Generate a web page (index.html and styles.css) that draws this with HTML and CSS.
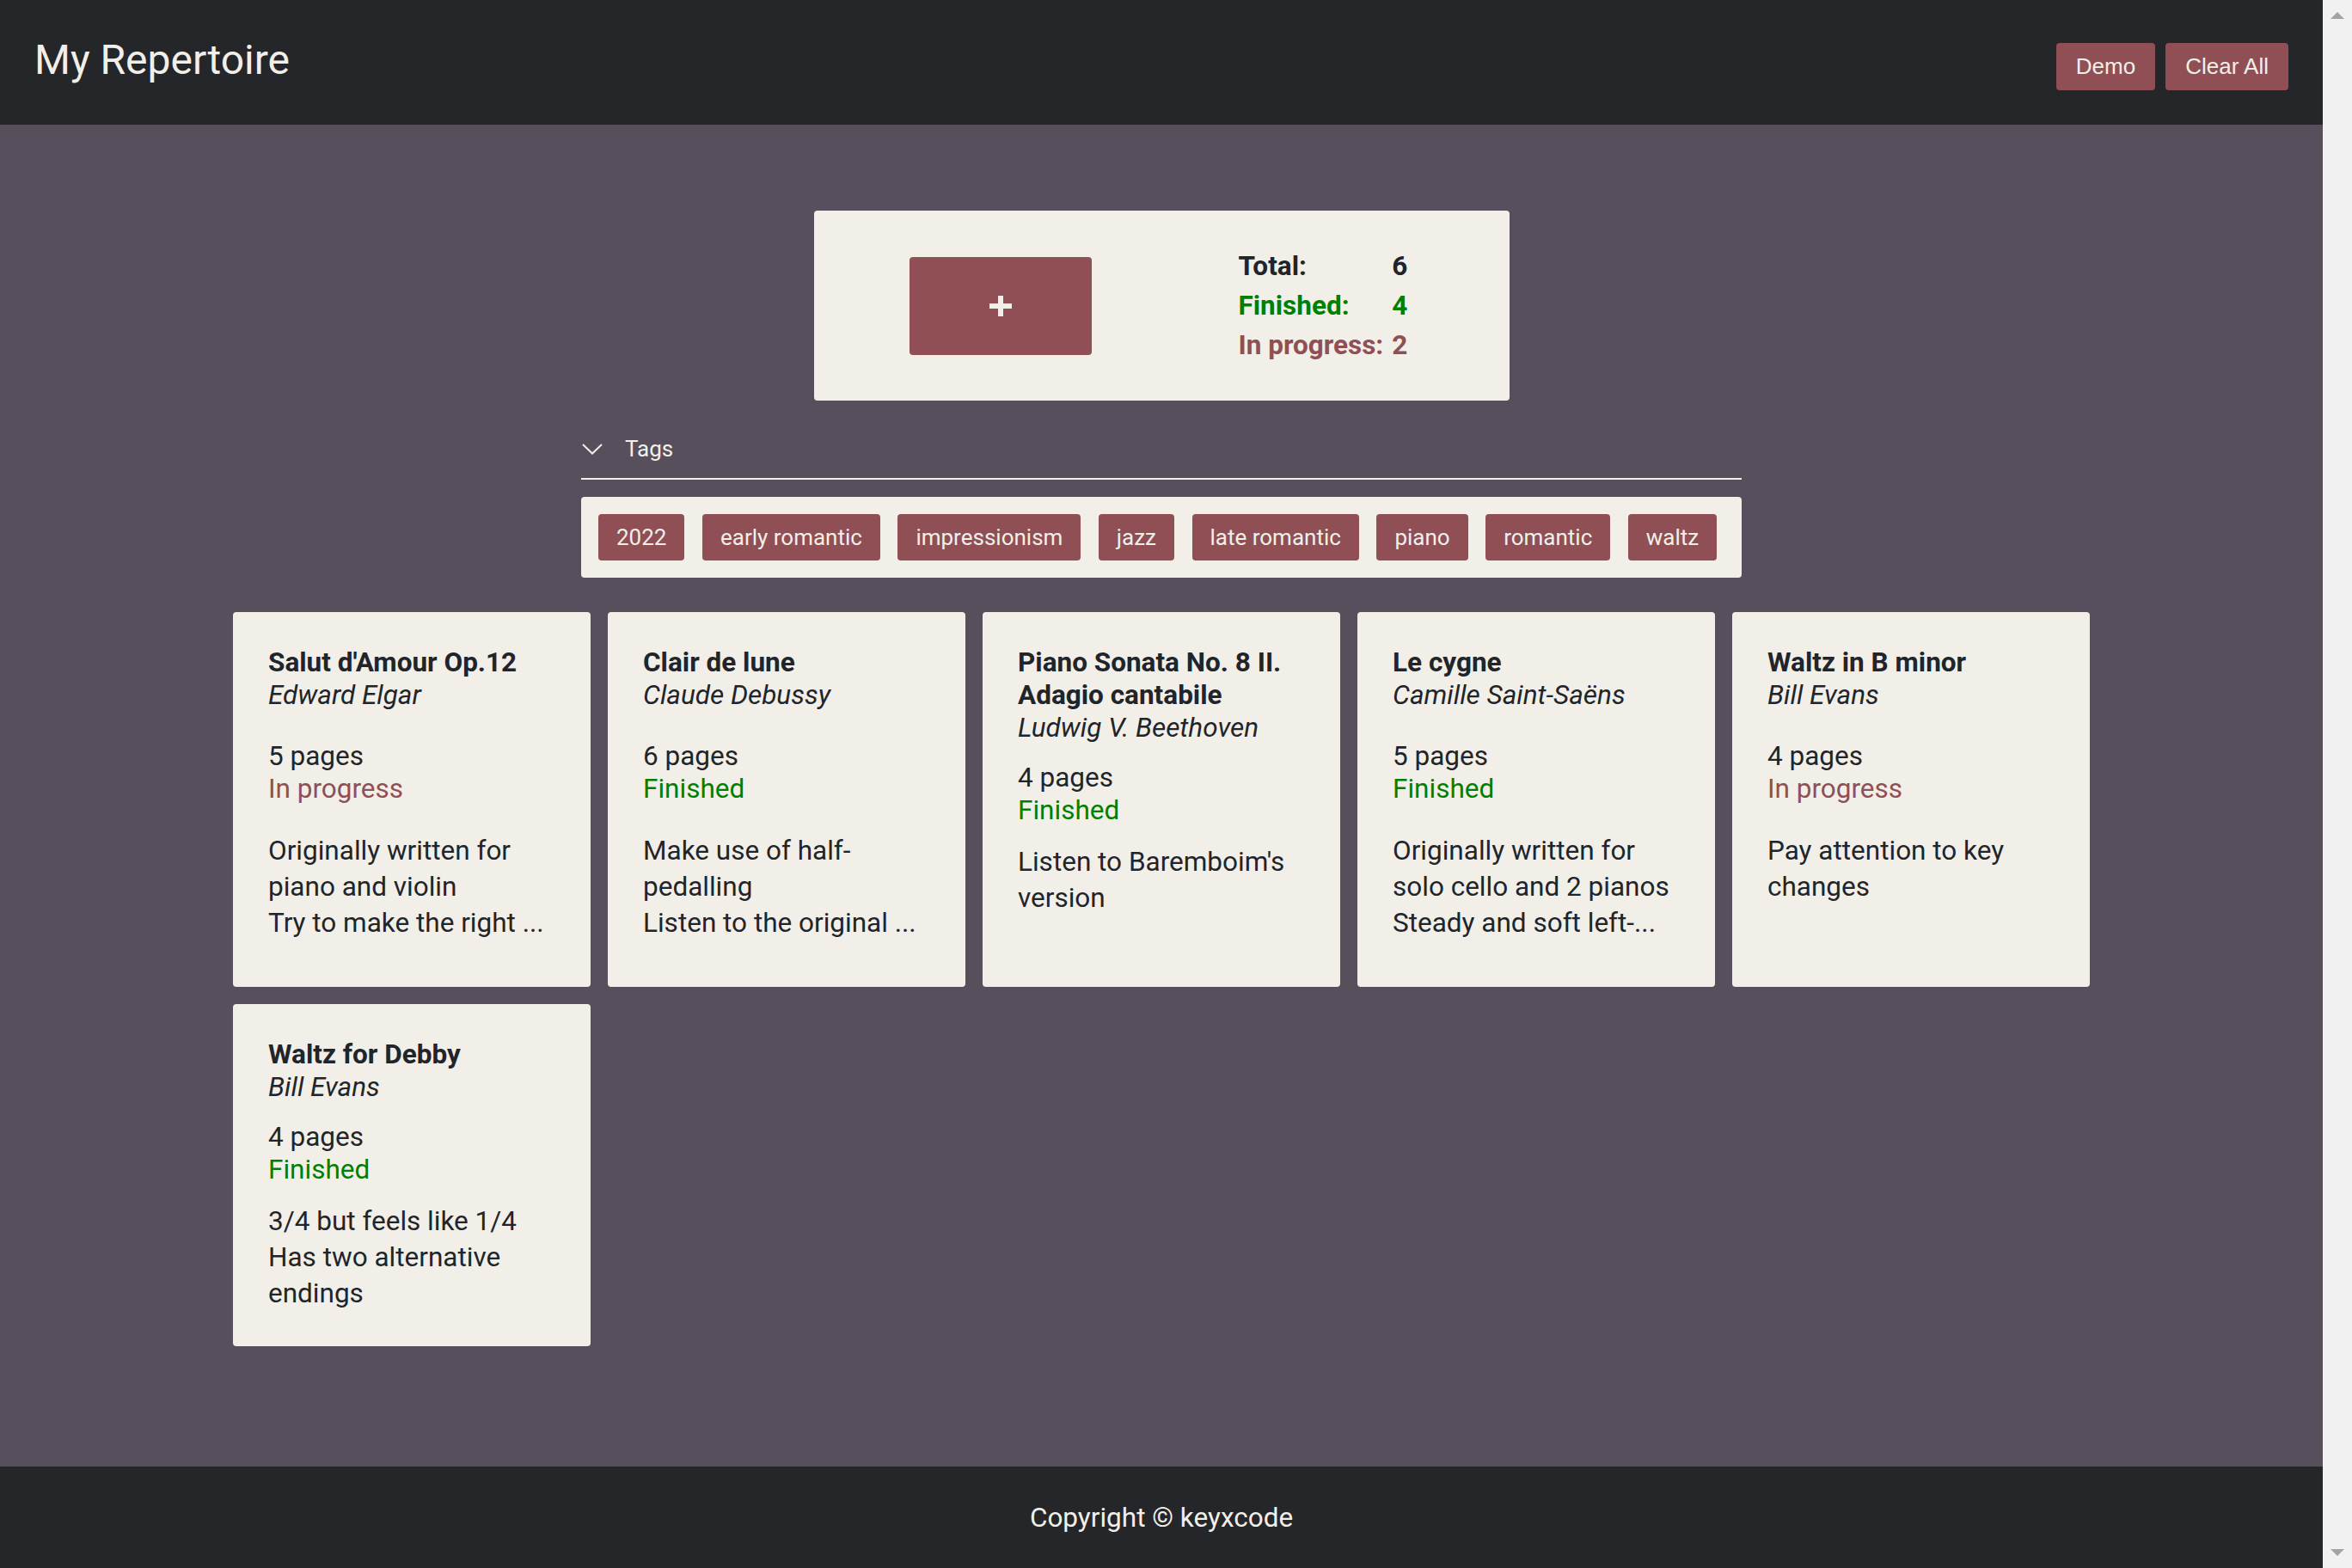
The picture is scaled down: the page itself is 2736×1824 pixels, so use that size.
FILE: index.html
```html
<!DOCTYPE html>
<html>
<head>
    <meta charset="UTF-8">
    <title>My Repertoire</title>
    <link rel="stylesheet" href="styles.css">
</head>
<body>
    <div class="window">
        <div class="page">
            <header class="topbar">
                <h1 class="brand">My Repertoire</h1>
                <div class="actions">
                    <button class="btn">Demo</button>
                    <button class="btn">Clear All</button>
                </div>
            </header>

            <main class="content">
                <section class="summary">
                    <button class="add-btn" title="Add piece">
                        <svg width="26" height="24" viewBox="0 0 26 24">
                            <rect x="0" y="9" width="26" height="6" fill="#f2efe9"/>
                            <rect x="10" y="0" width="6" height="24" fill="#f2efe9"/>
                        </svg>
                    </button>
                    <table class="stats">
                        <tr class="total"><td>Total:</td><td class="num">6</td></tr>
                        <tr class="finished"><td>Finished:</td><td class="num">4</td></tr>
                        <tr class="progress"><td>In progress:</td><td class="num">2</td></tr>
                    </table>
                </section>

                <section class="tags">
                    <div class="tags-head">
                        <svg class="chevron" width="24" height="13" viewBox="0 0 24 13">
                            <polyline points="1,1 12,11.5 23,1" fill="none" stroke="#f2efe9" stroke-width="2"/>
                        </svg>
                        <span>Tags</span>
                    </div>
                    <div class="tag-list">
                        <span class="tag">2022</span>
                        <span class="tag">early romantic</span>
                        <span class="tag">impressionism</span>
                        <span class="tag">jazz</span>
                        <span class="tag">late romantic</span>
                        <span class="tag">piano</span>
                        <span class="tag">romantic</span>
                        <span class="tag">waltz</span>
                    </div>
                </section>

                <section class="pieces">
                    <div class="card">
                        <div class="card-head">
                            <h2>Salut d'Amour Op.12</h2>
                            <p class="composer">Edward Elgar</p>
                        </div>
                        <div class="card-meta">
                            <p>5 pages</p>
                            <p class="status-progress">In progress</p>
                        </div>
                        <div class="card-notes">
                            <p class="notes">Originally written for piano and violin
Try to make the right ...</p>
                        </div>
                    </div>

                    <div class="card">
                        <div class="card-head">
                            <h2>Clair de lune</h2>
                            <p class="composer">Claude Debussy</p>
                        </div>
                        <div class="card-meta">
                            <p>6 pages</p>
                            <p class="status-finished">Finished</p>
                        </div>
                        <div class="card-notes">
                            <p class="notes">Make use of half-pedalling
Listen to the original ...</p>
                        </div>
                    </div>

                    <div class="card">
                        <div class="card-head">
                            <h2>Piano Sonata No. 8 II. Adagio cantabile</h2>
                            <p class="composer">Ludwig V. Beethoven</p>
                        </div>
                        <div class="card-meta">
                            <p>4 pages</p>
                            <p class="status-finished">Finished</p>
                        </div>
                        <div class="card-notes">
                            <p class="notes">Listen to Baremboim's version</p>
                        </div>
                    </div>

                    <div class="card">
                        <div class="card-head">
                            <h2>Le cygne</h2>
                            <p class="composer">Camille Saint-Saëns</p>
                        </div>
                        <div class="card-meta">
                            <p>5 pages</p>
                            <p class="status-finished">Finished</p>
                        </div>
                        <div class="card-notes">
                            <p class="notes">Originally written for solo cello and 2 pianos
Steady and soft left-...</p>
                        </div>
                    </div>

                    <div class="card">
                        <div class="card-head">
                            <h2>Waltz in B minor</h2>
                            <p class="composer">Bill Evans</p>
                        </div>
                        <div class="card-meta">
                            <p>4 pages</p>
                            <p class="status-progress">In progress</p>
                        </div>
                        <div class="card-notes">
                            <p class="notes">Pay attention to key changes</p>
                        </div>
                    </div>

                    <div class="card">
                        <div class="card-head">
                            <h2>Waltz for Debby</h2>
                            <p class="composer">Bill Evans</p>
                        </div>
                        <div class="card-meta">
                            <p>4 pages</p>
                            <p class="status-finished">Finished</p>
                        </div>
                        <div class="card-notes">
                            <p class="notes">3/4 but feels like 1/4
Has two alternative endings</p>
                        </div>
                    </div>
                </section>
            </main>

            <footer class="footer">Copyright © keyxcode</footer>
        </div>

        <div class="scrollbar">
            <span class="arrow-up"></span>
            <span class="arrow-down"></span>
        </div>
    </div>
</body>
</html>
```

FILE: styles.css
```css
* {
    box-sizing: border-box;
}

body {
    margin: 0;
    font-family: Roboto, "Liberation Sans", sans-serif;
    color: #212529;
    background-color: #574f5b;
}

.window {
    display: flex;
    min-height: 100vh;
}

.page {
    flex: 1;
    display: flex;
    flex-direction: column;
}

/* header */
.topbar {
    height: 145px;
    padding: 0 40px;
    display: flex;
    justify-content: space-between;
    align-items: flex-start;
    background-color: #252629;
}

.brand {
    margin: 42px 0 0;
    font-size: 48px;
    line-height: 56px;
    font-weight: 400;
    color: #f2efe9;
}

.actions {
    margin-top: 50px;
    display: flex;
    gap: 12px;
}

.btn {
    height: 55px;
    padding: 0 23px;
    border: none;
    border-radius: 4px;
    background-color: #8f4f55;
    color: #f2efe9;
    font-family: "Liberation Sans", Arial, sans-serif;
    font-size: 26px;
    cursor: pointer;
}

/* main */
.content {
    flex: 1;
    padding-top: 100px;
    padding-bottom: 40px;
}

.summary {
    width: 809px;
    height: 221px;
    margin: 0 auto;
    padding-left: 111px;
    display: flex;
    align-items: center;
    gap: 171px;
    background-color: #f2efe9;
    border-radius: 4px;
}

.add-btn {
    width: 212px;
    height: 114px;
    border: none;
    border-radius: 4px;
    background-color: #8f4f55;
    display: flex;
    align-items: center;
    justify-content: center;
    cursor: pointer;
}

.stats {
    border-collapse: collapse;
    font-size: 31.5px;
    font-weight: 700;
}

.stats td {
    padding: 0;
    height: 46px;
    line-height: 46px;
}

.stats .num {
    padding-left: 10px;
}

.total {
    color: #212529;
}

.finished {
    color: #008000;
}

.progress {
    color: #8f4f55;
}

/* tags */
.tags {
    width: 1350px;
    margin: 42px auto 0;
}

.tags-head {
    display: flex;
    align-items: center;
    gap: 26px;
    height: 50px;
    padding-bottom: 20px;
    border-bottom: 2px solid #f2efe9;
    color: #f2efe9;
    font-size: 26px;
    line-height: 30px;
}

.chevron {
    margin-left: 1px;
}

.tag-list {
    margin-top: 20px;
    padding: 20px;
    display: flex;
    flex-wrap: wrap;
    gap: 20.5px;
    background-color: #f2efe9;
    border-radius: 4px;
}

.tag {
    height: 54px;
    padding: 0 21px;
    display: inline-flex;
    align-items: center;
    border-radius: 4px;
    background-color: #8f4f55;
    color: #f2efe9;
    font-size: 26px;
}

/* cards */
.pieces {
    margin-top: 40px;
    display: grid;
    grid-template-columns: repeat(5, 416px);
    gap: 20px;
    justify-content: center;
}

.card {
    padding: 40px 42px 40px 41px;
    display: flex;
    flex-direction: column;
    gap: 20px;
    background-color: #f2efe9;
    border-radius: 4px;
    font-size: 31.5px;
    line-height: 38px;
}

.card-head,
.card-meta,
.card-notes {
    flex-grow: 1;
}

.card h2 {
    margin: 0;
    font-size: 31.5px;
    line-height: 38px;
    font-weight: 700;
}

.card p {
    margin: 0;
}

.composer {
    font-style: italic;
}

.status-progress {
    color: #8f4f55;
}

.status-finished {
    color: #008000;
}

.card .notes {
    height: 126px;
    line-height: 42px;
    white-space: pre-line;
    overflow: hidden;
}

/* footer */
.footer {
    height: 118px;
    display: flex;
    align-items: center;
    justify-content: center;
    background-color: #252629;
    color: #f2efe9;
    font-size: 31.5px;
}

/* window scrollbar strip */
.scrollbar {
    width: 34px;
    padding: 14px 0;
    display: flex;
    flex-direction: column;
    justify-content: space-between;
    align-items: center;
    background-color: #f1f1f1;
}

.arrow-up,
.arrow-down {
    width: 0;
    height: 0;
    border-left: 8px solid transparent;
    border-right: 8px solid transparent;
}

.arrow-up {
    border-bottom: 8px solid #a3a3a3;
}

.arrow-down {
    border-top: 8px solid #a3a3a3;
}
```
